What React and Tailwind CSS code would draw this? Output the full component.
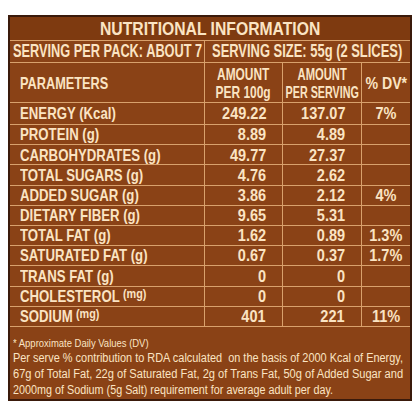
import React, { useLayoutEffect, useRef, useState } from "react";

const rows = [
  ["ENERGY (Kcal)", null, "249.22", "137.07", "7%"],
  ["PROTEIN (g)", null, "8.89", "4.89", ""],
  ["CARBOHYDRATES (g)", null, "49.77", "27.37", ""],
  ["TOTAL SUGARS (g)", null, "4.76", "2.62", ""],
  ["ADDED SUGAR (g)", null, "3.86", "2.12", "4%"],
  ["DIETARY FIBER (g)", null, "9.65", "5.31", ""],
  ["TOTAL FAT (g)", null, "1.62", "0.89", "1.3%"],
  ["SATURATED FAT (g)", null, "0.67", "0.37", "1.7%"],
  ["TRANS FAT (g)", null, "0", "0", ""],
  ["CHOLESTEROL", "(mg)", "0", "0", ""],
  ["SODIUM", "(mg)", "401", "221", "11%"],
];

const font = { fontFamily: '"Liberation Sans", Arial, sans-serif' };

function Fit({ w, s, origin = "left", children, className = "" }) {
  const ref = useRef(null);
  const [scale, setScale] = useState(s || 1);
  useLayoutEffect(() => {
    if (w && ref.current) {
      const nat = ref.current.offsetWidth;
      if (nat > 0) setScale(w / nat);
    }
  }, [w]);
  return (
    <span
      ref={ref}
      className={"inline-block whitespace-nowrap " + className}
      style={{ transform: `scaleX(${scale})`, transformOrigin: origin }}
    >
      {children}
    </span>
  );
}

const line = "border-[#d9a16c]";

export default function App() {
  return (
    <div className="w-[420px] h-[420px] bg-white pt-[15px] pl-[8px] overflow-hidden" style={font}>
      <div className="w-[404px] border-2 border-[#3a1a0b] bg-[#8a4216] text-[#fbe4c3]">
        <div className={"h-[24px] bg-[#7e3a10] border-b flex items-center justify-center font-bold text-[18px] leading-none " + line}>
          <Fit w={220} origin="center">NUTRITIONAL INFORMATION</Fit>
        </div>
        <div className={"grid grid-cols-[195px_205px] h-[22px] border-b font-bold text-[17.5px] leading-none " + line}>
          <div className={"flex items-center pl-[3px] border-r " + line}>
            <Fit w={189}>SERVING PER PACK: ABOUT 7</Fit>
          </div>
          <div className="flex items-center pl-[7px]">
            <Fit w={190}>SERVING SIZE: 55g (2 SLICES)</Fit>
          </div>
        </div>
        <div className={"grid grid-cols-[195px_78px_79px_48px] h-[40px] border-b font-bold text-[16.5px] leading-[18px] " + line}>
          <div className={"flex items-center pl-[10px] border-r " + line}>
            <Fit w={88}>PARAMETERS</Fit>
          </div>
          <div className={"flex flex-col items-center justify-center border-r " + line}>
            <Fit w={52} origin="center">AMOUNT</Fit>
            <Fit w={55} origin="center">PER 100g</Fit>
          </div>
          <div className={"flex flex-col items-center justify-center border-r " + line}>
            <Fit w={49} origin="center">AMOUNT</Fit>
            <Fit w={73} origin="center">PER SERVING</Fit>
          </div>
          <div className="flex items-center justify-center">
            <Fit w={42} origin="center">% DV*</Fit>
          </div>
        </div>
        {rows.map((r, i) => (
          <div
            key={i}
            className={
              "grid grid-cols-[195px_78px_79px_48px] border-b font-bold text-[16.5px] leading-none " +
              line +
              (i === 0 ? " h-[22px]" : " h-[20.2px]")
            }
          >
            <div className={"flex items-center pl-[10px] border-r " + line}>
              <Fit s={0.8}>
                {r[0]}
                {r[1] && <span className="ml-[4px] text-[13.5px] relative top-[-4px]">{r[1]}</span>}
              </Fit>
            </div>
            <div className={"flex items-center justify-end pr-[16px] border-r " + line}>
              <Fit s={0.88} origin="right">{r[2]}</Fit>
            </div>
            <div className={"flex items-center justify-end pr-[16px] border-r " + line}>
              <Fit s={0.88} origin="right">{r[3]}</Fit>
            </div>
            <div className="flex items-center justify-center">
              <Fit s={0.88} origin="center">{r[4]}</Fit>
            </div>
          </div>
        ))}
        <div className="pl-[3px] pt-[9px] pb-[1px]">
          <div className="text-[11px] leading-[14px] h-[14px]">
            <Fit w={136}>* Approximate Daily Values (DV)</Fit>
          </div>
          <div className="text-[12px] leading-[16px]">
            <div className="h-[16px]">
              <Fit w={390}>Per serve % contribution to RDA calculated&nbsp; on the basis of 2000 Kcal of Energy,</Fit>
            </div>
            <div className="h-[16px]">
              <Fit w={390}>67g of Total Fat, 22g of Saturated Fat, 2g of Trans Fat, 50g of Added Sugar and</Fit>
            </div>
            <div className="h-[16px]">
              <Fit w={320}>2000mg of Sodium (5g Salt) requirement for average adult per day.</Fit>
            </div>
          </div>
        </div>
      </div>
    </div>
  );
}
